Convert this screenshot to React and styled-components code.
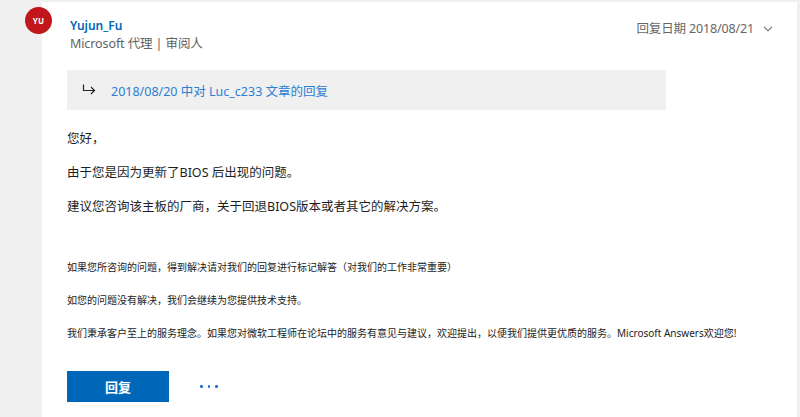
import React from "react";
import styled, { createGlobalStyle } from "styled-components";

const Global = createGlobalStyle`
  html, body { margin: 0; padding: 0; }
  body {
    background: #f0f0f0;
    font-family: "Segoe UI", "Noto Sans", "Noto Sans CJK SC", sans-serif;
    -webkit-font-smoothing: antialiased;
  }
`;

const Page = styled.div`
  padding: 2px 3px 0 42px;
  height: 415px;
  overflow: hidden;
`;

const Card = styled.article`
  position: relative;
  background: #fff;
  min-height: 415px;
  box-sizing: border-box;
  padding: 15px 24px 0 25px;
`;

const Avatar = styled.div`
  position: absolute;
  left: -17px;
  top: 5px;
  width: 27px;
  height: 27px;
  border-radius: 50%;
  background: #c0161c;
  color: #fff;
  font-size: 8px;
  font-weight: 700;
  display: flex;
  align-items: center;
  justify-content: center;
  letter-spacing: 0.2px;
`;

const Header = styled.header`
  display: flex;
  justify-content: space-between;
  align-items: flex-start;
`;

const Author = styled.div`
  margin-left: 3px;
  display: flex;
  flex-direction: column;
`;

const Name = styled.a`
  color: #0067b8;
  font-size: 12px;
  font-weight: 600;
  line-height: 18px;
  text-decoration: none;
`;

const Role = styled.span`
  color: #616161;
  font-size: 12.5px;
  line-height: 18px;
  letter-spacing: -0.1px;
`;

const DateRow = styled.div`
  display: flex;
  align-items: center;
  gap: 9px;
  color: #666;
  font-size: 12.5px;
  line-height: 18px;
  margin-top: 3px;
  letter-spacing: -0.15px;
`;

const Quote = styled.div`
  margin-top: 17px;
  width: 599px;
  height: 40px;
  background: #f0f0f0;
  display: flex;
  align-items: center;
  gap: 15px;
  padding-left: 15px;
  box-sizing: border-box;
`;

const QuoteLink = styled.a`
  color: #2b7fd4;
  font-size: 12.5px;
  text-decoration: none;
`;

const Body = styled.div`
  margin-top: 19px;
`;

const Para = styled.p`
  margin: 0 0 14px;
  color: #1e1e1e;
  font-size: 12.5px;
  line-height: 20px;
`;

const Notes = styled.div`
  margin-top: 42px;
`;

const Note = styled.p`
  margin: 0 0 17px;
  color: #222;
  font-size: 10px;
  line-height: 16px;
`;

const Actions = styled.div`
  margin-top: 30px;
  display: flex;
  align-items: center;
  gap: 31px;
`;

const ReplyButton = styled.button`
  width: 102px;
  height: 31px;
  border: none;
  background: #0067b8;
  color: #fff;
  font-family: inherit;
  font-size: 13px;
  font-weight: 700;
  cursor: pointer;
`;

const More = styled.button`
  border: none;
  background: none;
  padding: 0;
  display: flex;
  gap: 5px;
  cursor: pointer;
`;

const Dot = styled.span`
  width: 2.5px;
  height: 2.5px;
  border-radius: 50%;
  background: #1a6fd6;
`;

const Chevron = () => (
  <svg width="10" height="6" viewBox="0 0 10 6">
    <path d="M1 0.8 L5 4.8 L9 0.8" fill="none" stroke="#666" strokeWidth="1.1" />
  </svg>
);

const ReplyArrow = () => (
  <svg width="14" height="12" viewBox="0 0 14 12">
    <path d="M1.5 0.5 V6.5 H12.5 M9 3 L12.5 6.5 L9 10" fill="none" stroke="#222" strokeWidth="1.2" />
  </svg>
);

export default function App() {
  return (
    <>
      <Global />
      <Page>
        <Card>
          <Avatar>YU</Avatar>
          <Header>
            <Author>
              <Name href="#">Yujun_Fu</Name>
              <Role>Microsoft 代理 | 审阅人</Role>
            </Author>
            <DateRow>
              <span>回复日期 2018/08/21</span>
              <Chevron />
            </DateRow>
          </Header>
          <Quote>
            <ReplyArrow />
            <QuoteLink href="#">2018/08/20 中对 Luc_c233 文章的回复</QuoteLink>
          </Quote>
          <Body>
            <Para>您好，</Para>
            <Para>由于您是因为更新了BIOS 后出现的问题。</Para>
            <Para>建议您咨询该主板的厂商，关于回退BIOS版本或者其它的解决方案。</Para>
          </Body>
          <Notes>
            <Note>如果您所咨询的问题，得到解决请对我们的回复进行标记解答（对我们的工作非常重要）</Note>
            <Note>如您的问题没有解决，我们会继续为您提供技术支持。</Note>
            <Note>我们秉承客户至上的服务理念。如果您对微软工程师在论坛中的服务有意见与建议，欢迎提出，以便我们提供更优质的服务。Microsoft Answers欢迎您!</Note>
          </Notes>
          <Actions>
            <ReplyButton>回复</ReplyButton>
            <More aria-label="更多">
              <Dot />
              <Dot />
              <Dot />
            </More>
          </Actions>
        </Card>
      </Page>
    </>
  );
}
